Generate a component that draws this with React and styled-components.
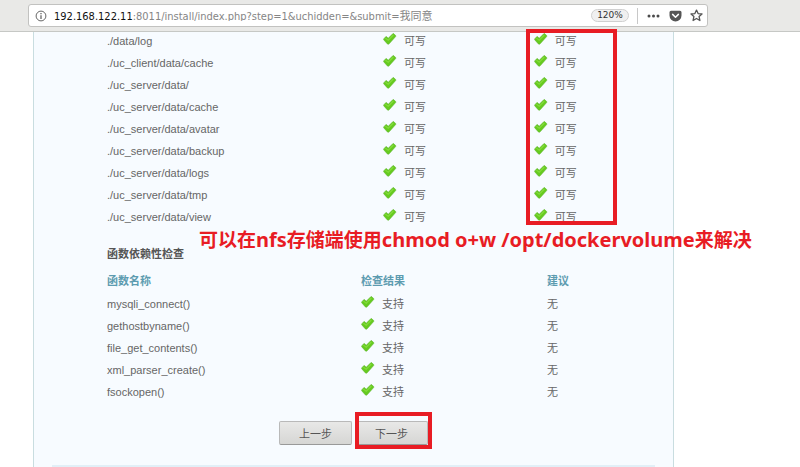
import styled, {createGlobalStyle, css} from "styled-components";
import {useState} from "react";

const GlobalStyle = createGlobalStyle`
  body{
    margin: 0;
    background: #fff;
    overflow: hidden;
    font-family: "Liberation Sans", "Noto Sans CJK SC", sans-serif;
  }
`

const Toolbar = styled.header`
  position: relative;
  z-index: 1;
  display: flex;
  padding: 4px 92px 4px 28px;
  background: #e9e9e7;
  border-bottom: 1px solid #c6c8c5;
`

const UrlBar = styled.div`
  flex: 1;
  display: flex;
  align-items: center;
  height: 21px;
  padding: 0 4px 0 6px;
  background: #fff;
  border: 1px solid #c2c2c0;
  border-radius: 3px;
  font-family: "DejaVu Sans Condensed", "DejaVu Sans", "Noto Sans CJK SC", sans-serif;
  font-size: 11px;
`

const Address = styled.div`
  flex: 1;
  display: flex;
  align-items: baseline;
  margin-left: 7px;
`

const Host = styled.label`
  color: #111;
`

const UrlInput = styled.input`
  flex: 1;
  min-width: 0;
  padding: 0;
  border: 0;
  outline: 0;
  background: none;
  color: #858585;
  font: inherit;
`

const Zoom = styled.button`
  width: 38px;
  height: 13px;
  padding: 0;
  border: 1px solid #d0d0d0;
  border-radius: 7px;
  background: #f0f0f0;
  color: #333;
  font-family: "DejaVu Sans", sans-serif;
  font-size: 9px;
  line-height: 11px;
`

const Divider = styled.div`
  width: 1px;
  height: 16px;
  margin: 0 9px 0 8px;
  background: #c8c8c8;
`

const IconButton = styled.button`
  display: flex;
  margin-right: ${props => props.$gap || 0}px;
  padding: 0;
  border: 0;
  background: none;
`

const Page = styled.main`
  position: relative;
  margin: -2px 126px 0 33px;
`

const Panel = styled.div`
  padding: 0 18px;
  border: solid #c9dde0;
  border-width: 0 1px;
  background: #f7fbff;
`

const Content = styled.div`
  padding: 0 46px 0 55px;
`

const Table = styled.table`
  width: 100%;
  table-layout: fixed;
  border-collapse: collapse;
  color: #666;
  font-size: 11px;
`

const Col = styled.col`
  width: ${props => props.$width};
`

const Th = styled.th`
  height: 25px;
  padding: 0;
  color: #5d9bb0;
  text-align: left;
  line-height: 16px;
`

const Td = styled.td`
  height: 22px;
  padding: 0;
  line-height: 16px;
  white-space: nowrap;
`

const Title = styled.h3`
  margin: 15px 0 3px;
  color: #555;
  font-size: 11px;
  line-height: 22px;
`

const Status = styled.span`
  display: flex;
  gap: 7px;
`

const Actions = styled.div`
  display: flex;
  justify-content: center;
  gap: 3px;
  padding: 18px 0 20px;
`

const Button = styled.button`
  width: 73px;
  height: 24px;
  padding: 0;
  border: 1px solid #b9b9b9;
  border-bottom-color: #999;
  border-radius: 2px;
  background: linear-gradient(#e8e8e7, #d6d6d4);
  color: #555;
  font-family: inherit;
  font-size: 11px;
`

const Footer = styled.footer`
  height: 20px;
  border-top: 2px solid #e2eff7;
`

const NextWrap = styled.div`
  position: relative;
  display: flex;
`

const marker = css`
  position: absolute;
  z-index: 2;
  box-sizing: border-box;
  border: 4px solid #e81c24;
  pointer-events: none;
`

const ColumnMark = styled.div`
  ${marker}
  top: -1px;
  left: 493px;
  width: 91px;
  height: 196px;
`

const ButtonMark = styled.div`
  ${marker}
  top: -9px;
  left: 0;
  width: 77px;
  height: 37px;
`

const Note = styled.div`
  position: absolute;
  z-index: 2;
  top: 196px;
  left: 166px;
  color: #e81c24;
  font-family: "Noto Sans", "Noto Sans CJK SC", sans-serif;
  font-size: 19px;
  font-weight: bold;
  line-height: 28px;
  white-space: nowrap;
`

const Latin = styled.span`
  font-size: 20px;
`

const paths = [
    "./data/log",
    "./uc_client/data/cache",
    "./uc_server/data/",
    "./uc_server/data/cache",
    "./uc_server/data/avatar",
    "./uc_server/data/backup",
    "./uc_server/data/logs",
    "./uc_server/data/tmp",
    "./uc_server/data/view",
]

const funcs = [
    "mysqli_connect()",
    "gethostbyname()",
    "file_get_contents()",
    "xml_parser_create()",
    "fsockopen()",
]

function Check({children}){
    return <Status>
        <svg width="14" height="12" viewBox="0 0 14 12" aria-hidden="true">
            <path d="M.7 5.9 2.9 3.6Q3.3 3.4 3.7 3.8L5.2 5.3 9.8.7Q10.3.3 10.8.7L12.7 2.6Q13.1 3 12.7 3.5L6 10.9Q5.2 11.5 4.4 10.9L.8 6.9Q.4 6.4.7 5.9Z" fill="#66cb1f" stroke="#62b634" strokeWidth=".6" strokeLinejoin="round"/>
            <path d="M2.4 5.1 5.2 7.3 10.4 2" fill="none" stroke="#84dc3c" strokeWidth="1.2"/>
        </svg>
        {children}
    </Status>
}

export default function App(){

    const [url,setUrl] = useState(":8011/install/index.php?step=1&uchidden=&submit=我同意");

    return <>
        <GlobalStyle />
        <Toolbar>
            <UrlBar>
                <IconButton aria-label="Site information">
                    <svg width="12" height="12" viewBox="0 0 12 12">
                        <circle cx="6" cy="6" r="4.9" fill="none" stroke="#666" strokeWidth="1"/>
                        <path d="M6 5.2V9M6 2.9V4.2" stroke="#666" strokeWidth="1.3"/>
                    </svg>
                </IconButton>
                <Address>
                    <Host htmlFor="url">192.168.122.11</Host>
                    <UrlInput id="url" value={url} onChange={e=>setUrl(e.target.value)}/>
                </Address>
                <Zoom>120%</Zoom>
                <Divider />
                <IconButton aria-label="Page actions" $gap={9}>
                    <svg width="13" height="12" viewBox="0 0 13 12" fill="#4a4a4a">
                        <circle cx="2" cy="6" r="1.5"/>
                        <circle cx="6.5" cy="6" r="1.5"/>
                        <circle cx="11" cy="6" r="1.5"/>
                    </svg>
                </IconButton>
                <IconButton aria-label="Save to Pocket" $gap={8}>
                    <svg width="13" height="12" viewBox="0 0 13 12">
                        <path d="M2 .8H11Q12.5 .8 12.5 2.3V5.4A6 6 0 0 1 .5 5.4V2.3Q.5 .8 2 .8Z" fill="#555"/>
                        <path d="M3.6 4.4 6.5 7.2 9.4 4.4" fill="none" stroke="#fff" strokeWidth="1.5" strokeLinecap="round" strokeLinejoin="round"/>
                    </svg>
                </IconButton>
                <IconButton aria-label="Bookmark">
                    <svg width="13" height="13" viewBox="0 0 13 13">
                        <path d="M6.5 1.1 8.1 4.6 12 5 9.1 7.6 9.9 11.5 6.5 9.5 3.1 11.5 3.9 7.6 1 5 4.9 4.6Z" fill="none" stroke="#555" strokeWidth="1.3" strokeLinejoin="round"/>
                    </svg>
                </IconButton>
            </UrlBar>
        </Toolbar>
        <Page>
            <Panel>
                <Content>
                    <Table>
                        <colgroup>
                            <Col $width="55%"/>
                            <Col $width="30%"/>
                            <Col />
                        </colgroup>
                        <tbody>
                        {
                            paths.map(path => <tr key={path}>
                                <Td>{path}</Td>
                                <Td><Check>可写</Check></Td>
                                <Td><Check>可写</Check></Td>
                            </tr>)
                        }
                        </tbody>
                    </Table>
                    <Title>函数依赖性检查</Title>
                    <Table>
                        <colgroup>
                            <Col $width="254px"/>
                            <Col $width="186px"/>
                            <Col />
                        </colgroup>
                        <thead>
                        <tr>
                            <Th>函数名称</Th>
                            <Th>检查结果</Th>
                            <Th>建议</Th>
                        </tr>
                        </thead>
                        <tbody>
                        {
                            funcs.map(name => <tr key={name}>
                                <Td>{name}</Td>
                                <Td><Check>支持</Check></Td>
                                <Td>无</Td>
                            </tr>)
                        }
                        </tbody>
                    </Table>
                </Content>
                <Actions>
                    <Button>上一步</Button>
                    <NextWrap>
                        <Button>下一步</Button>
                        <ButtonMark />
                    </NextWrap>
                </Actions>
                <Footer />
            </Panel>
            <ColumnMark />
            <Note>可以在<Latin>nfs</Latin>存储端使用<Latin>chmod o+w /opt/dockervolume</Latin>来解决</Note>
        </Page>
    </>
}
